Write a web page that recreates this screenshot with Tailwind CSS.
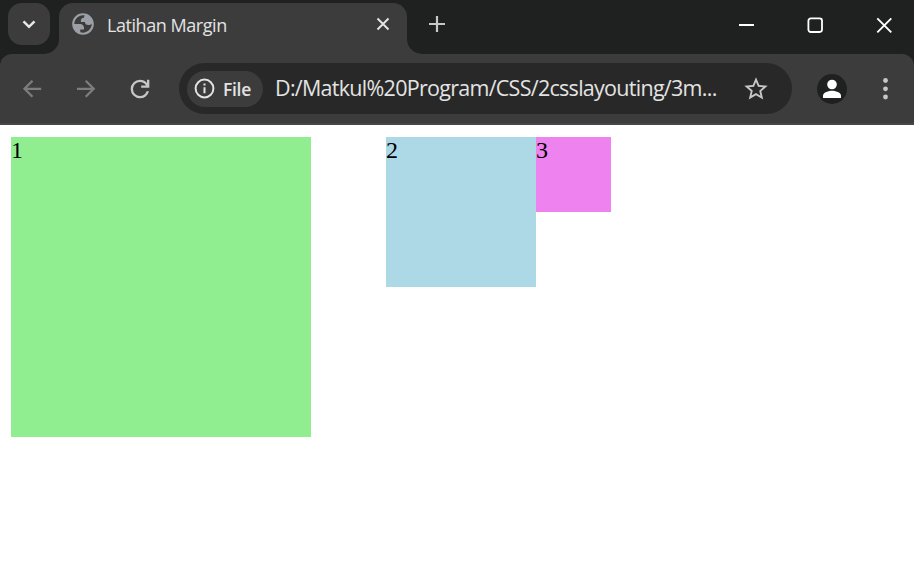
<!DOCTYPE html>
<html lang="id">
<head>
<meta charset="utf-8">
<title>Latihan Margin</title>
<script src="https://cdn.jsdelivr.net/npm/@tailwindcss/browser@4"></script>
</head>
<body class="w-[914px] h-[562px] overflow-hidden bg-white font-['Open_Sans','Noto_Sans',sans-serif]">
<header class="bg-[#1f2120]">
  <!-- tab strip -->
  <div class="flex h-[54px] pt-[3px] pl-2">
    <button class="flex size-[42px] items-center justify-center rounded-[14px] bg-[#3c3c3c]">
      <svg class="size-[42px]" viewBox="0 0 42 42" fill="none" stroke="#e8e8e8" stroke-width="2.5"><path d="M15.500 18.300l5.500 5.500 5.500-5.500"/></svg>
    </button>
    <div class="relative ml-[9px] flex h-[51px] w-[348px] items-start rounded-t-[14px] bg-[#3c3c3c]">
      <svg class="absolute bottom-0 -left-[15px] size-[15px]" viewBox="0 0 15 15"><path d="M15 0v15H0A15 15 0 0 0 15 0z" fill="#3c3c3c"/></svg>
      <svg class="absolute bottom-0 -right-[15px] size-[15px]" viewBox="0 0 15 15"><path d="M0 0v15h15A15 15 0 0 1 0 0z" fill="#3c3c3c"/></svg>
      <svg class="mt-[8px] ml-[11px] size-[26px]" viewBox="0 0 24 24"><path fill="#9aa0a6" fill-rule="evenodd" d="M12 2C6.480 2 2 6.480 2 12s4.480 10 10 10 10-4.480 10-10S17.520 2 12 2zM4 12h4.400c3.407.022 4.922 1.730 4.543 5.127H9.488v2.470a8.004 8.004 0 0 0 10.498-8.083C19.327 12.504 18.332 13 17 13c-2.137 0-3.206-.916-3.206-2.750h-3.748c-.274-2.728.683-4.092 2.870-4.092 0-.975.327-1.597.811-1.970A8.004 8.004 0 0 0 4 12z"/></svg>
      <span class="mt-[10px] ml-[11px] w-[200px] whitespace-nowrap text-[18px] leading-[25px] tracking-[-0.45px] text-[#e3e3e3]">Latihan Margin</span>
      <svg class="mt-[13px] ml-[68px] size-4" viewBox="0 0 16 16" fill="none" stroke="#e3e3e3" stroke-width="2"><path d="M2.500 2.500l11 11M13.500 2.500l-11 11"/></svg>
    </div>
    <svg class="mt-[12px] ml-[21px] size-[18px]" viewBox="0 0 18 18" fill="none" stroke="#c7c7c7" stroke-width="2.200"><path d="M9 1v16M1 9h16"/></svg>
    <div class="ml-auto flex gap-[53px] pt-[14px] pr-[22px]">
      <svg class="size-4" viewBox="0 0 16 16"><path d="M1 7h15v2H1z" fill="#fff"/></svg>
      <svg class="size-4" viewBox="0 0 16 16" fill="none" stroke="#fff" stroke-width="1.800"><rect x="1.400" y="1.400" width="13.600" height="13.600" rx="2.400"/></svg>
      <svg class="size-4" viewBox="0 0 16 16" fill="none" stroke="#fff" stroke-width="1.900"><path d="M1.300 1.300l14 14M15.300 1.300l-14 14"/></svg>
    </div>
  </div>
  <!-- toolbar -->
  <div class="flex h-[71px] items-center rounded-t-[12px] border-b-2 border-[#474747] bg-[#3c3c3c] pl-[21px]">
    <svg class="size-[22px]" viewBox="0 0 22 22" fill="none" stroke="#7d7d7d" stroke-width="2.300"><path d="M20.200 10.800H4M11.500 2.800l-8 8 8 8"/></svg>
    <svg class="ml-[32px] size-[22px]" viewBox="0 0 22 22" fill="none" stroke="#7d7d7d" stroke-width="2.300"><path d="M2 10.800h16.200M10.700 2.800l8 8-8 8"/></svg>
    <svg class="ml-[29px] size-[28px]" viewBox="0 0 24 24"><path fill="#c7c7c7" d="M12 20q-3.350 0-5.675-2.325Q4 15.350 4 12t2.325-5.675Q8.650 4 12 4q1.725 0 3.300.713 1.575.712 2.700 2.037V4h2v7h-7V9h4.200q-.8-1.400-2.188-2.200Q13.625 6 12 6 9.500 6 7.750 7.750 6 9.500 6 12q0 2.500 1.750 4.250Q9.500 18 12 18q1.925 0 3.475-1.100 1.550-1.100 2.175-2.900h2.100q-.7 2.650-2.850 4.325Q14.750 20 12 20z"/></svg>
    <div class="ml-[25px] flex h-[51px] w-[613px] items-center rounded-full bg-[#282828] pl-2">
      <div class="flex h-[36px] w-[76px] items-center rounded-full bg-[#3c3c3c] pl-[7px]">
        <svg class="size-[21px]" viewBox="0 0 21 21" fill="none" stroke="#e3e3e3" stroke-width="2"><circle cx="10.500" cy="10.500" r="8.900"/><path d="M10.500 9.200v6M10.500 5.600v2"/></svg>
        <span class="ml-[8px] text-[17.5px] leading-6 font-semibold tracking-[-0.3px] text-[#e3e3e3]">File</span>
      </div>
      <span class="ml-[12px] w-[442px] -mt-[2px] whitespace-nowrap text-[21.5px] leading-7 tracking-[-0.72px] text-[#e3e3e3]">D:/Matkul%20Program/CSS/2csslayouting/3m...</span>
      <svg class="ml-[25px] size-[28px]" viewBox="0 0 24 24"><path fill="#c7c7c7" d="M22 9.240l-7.190-.620L12 2 9.190 8.630 2 9.240l5.460 4.730L5.820 21 12 17.270 18.180 21l-1.630-7.030L22 9.240zM12 15.400l-3.760 2.270 1-4.280-3.320-2.880 4.380-.380L12 6.100l1.710 4.040 4.380.380-3.320 2.880 1 4.280L12 15.400z"/></svg>
    </div>
    <svg class="ml-[25px] size-[30px]" viewBox="0 0 30 30"><circle cx="15" cy="15" r="15" fill="#1f2120"/><circle cx="15" cy="10.500" r="4.800" fill="#fff"/><path fill="#fff" d="M6 24v-2.500c0-3.200 6-4.800 9-4.800s9 1.600 9 4.800V24z"/></svg>
    <svg class="ml-[35px] h-[24px] w-[6px]" viewBox="0 0 6 24" fill="#c7c7c7"><circle cx="3.500" cy="3.500" r="2.400"/><circle cx="3.500" cy="11.800" r="2.400"/><circle cx="3.500" cy="20" r="2.400"/></svg>
  </div>
</header>
<!-- page content -->
<main class="flex items-start pt-3 pl-[11px] font-['Liberation_Serif',serif] text-[24px] leading-[27px] text-black">
  <div class="size-[300px] bg-[lightgreen]">1</div>
  <div class="ml-[75px] size-[150px] bg-[lightblue]">2</div>
  <div class="size-[75px] bg-[violet]">3</div>
</main>
</body>
</html>
